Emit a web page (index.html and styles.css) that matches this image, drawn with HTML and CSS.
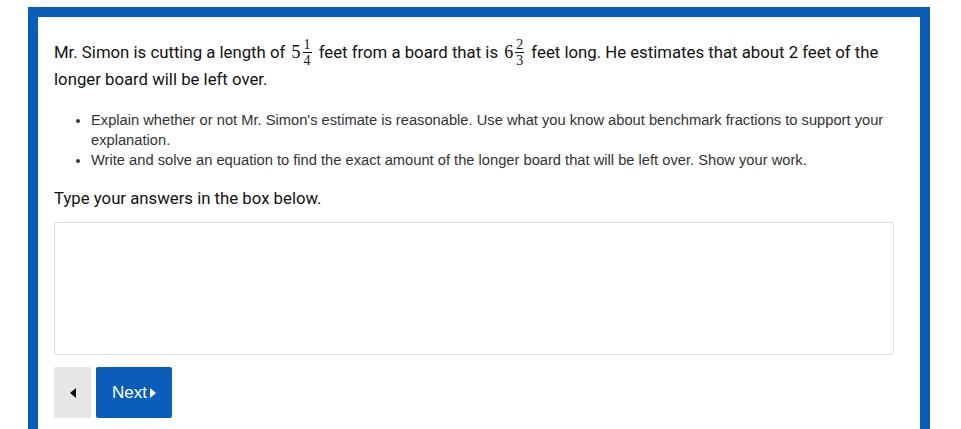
FILE: index.html
```html
<!DOCTYPE html>
<html lang="en">
<head>
  <meta charset="UTF-8" />
  <title>Question</title>
  <link rel="stylesheet" href="styles.css">
</head>
<body>

  <div class="frame">
    <p class="stem">
      Mr. Simon is cutting a length of
      <span class="mixed">5<span class="frac"><span class="num">1</span><span class="den">4</span></span></span>
      feet from a board that is
      <span class="mixed">6<span class="frac"><span class="num">2</span><span class="den">3</span></span></span>
      feet long. He estimates that about 2 feet of the longer board will be left over.
    </p>

    <ul class="tasks">
      <li>Explain whether or not Mr. Simon's estimate is reasonable. Use what you know about benchmark fractions to support your explanation.</li>
      <li>Write and solve an equation to find the exact amount of the longer board that will be left over. Show your work.</li>
    </ul>

    <p class="prompt">Type your answers in the box below.</p>

    <div class="answer-box"></div>

    <div class="nav">
      <button class="btn-prev" aria-label="Previous">
        <svg width="6" height="10" viewBox="0 0 6 10"><path d="M6 0 L0 5 L6 10 Z" fill="#111"/></svg>
      </button>
      <button class="btn-next">Next
        <svg width="6" height="10" viewBox="0 0 6 10"><path d="M0 0 L6 5 L0 10 Z" fill="#fff"/></svg>
      </button>
    </div>
  </div>

</body>
</html>
```

FILE: styles.css
```css
* {
  box-sizing: border-box;
}

body {
  margin: 0;
  padding: 7px 0 0 28px;
  background: #fff;
  font-family: Roboto, "Liberation Sans", Arial, sans-serif;
  color: #111;
}

.frame {
  width: 902px;
  height: 440px;
  border: 10px solid #0a5db8;
  border-bottom: none;
  padding: 22px 26px 0 16px;
}

.stem {
  margin: 0;
  font-size: 16.75px;
  line-height: 27px;
}

.mixed {
  margin-left: 2px;
  font-family: "Liberation Serif", "Times New Roman", serif;
  font-size: 18px;
  white-space: nowrap;
}

.frac {
  display: inline-block;
  vertical-align: middle;
  margin: -9px 3px -7px 2px;
  text-align: center;
  font-size: 14px;
  line-height: 13px;
}

.num,
.den {
  display: block;
}

.num {
  padding: 0 1px 1px;
  border-bottom: 1px solid #111;
}

.den {
  padding-top: 1px;
}

.tasks {
  margin: 17px 0 0;
  padding-left: 37px;
  font-family: "Liberation Sans", Arial, sans-serif;
  font-size: 14.7px;
  line-height: 20px;
  color: #333;
}

.prompt {
  margin: 18px 0 0;
  font-size: 16.75px;
  line-height: 20px;
}

.answer-box {
  margin-top: 14px;
  width: 840px;
  height: 133px;
  border: 1px solid #ddd;
  border-radius: 3px;
}

.nav {
  display: flex;
  gap: 5px;
  margin-top: 12px;
}

.nav button {
  height: 51px;
  border: none;
  border-radius: 2px;
  display: flex;
  align-items: center;
  justify-content: center;
  cursor: pointer;
}

.btn-prev {
  width: 37px;
  background: #e6e6e6;
}

.btn-next {
  width: 76px;
  gap: 3px;
  background: #0a5db8;
  color: #fff;
  font-family: "Liberation Sans", Arial, sans-serif;
  font-size: 17px;
}
```
